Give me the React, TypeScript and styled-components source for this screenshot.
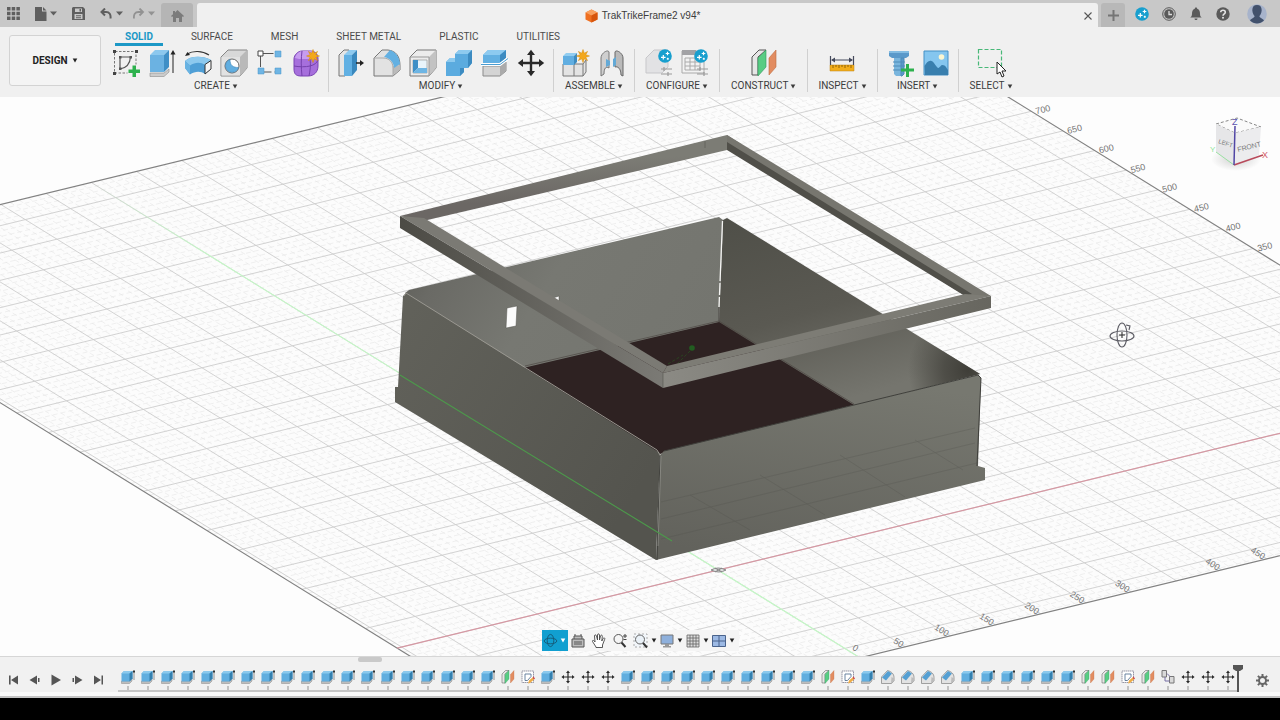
import React from "react";
import styled, { createGlobalStyle } from "styled-components";

const Global = createGlobalStyle`
  *, *::before, *::after { box-sizing: border-box; }
  body { margin: 0; background: #000; font-family: Roboto, "Liberation Sans", sans-serif; font-size: 10px; color: #3c3c3c; }
  button { font: inherit; color: inherit; border: 0; padding: 0; background: none; cursor: pointer; }
  svg { display: block; }
`;

const Page = styled.div`
  display: flex;
  flex-direction: column;
  min-height: 100vh;
`;

const TitleBar = styled.header`
  display: flex;
  height: 27px;
  padding-top: 3px;
  background: #c8c8c8;
`;

const QuickTools = styled.div`
  display: flex;
  align-items: center;
  gap: 15px;
  padding: 0 6px 3px 7px;
  color: #5f5f5f;
`;

const HistoryPair = styled.div`
  display: flex;
  gap: 9px;
`;

const QuickButton = styled.button<{ $faded?: boolean }>`
  display: flex;
  align-items: center;
  gap: 3px;
  color: ${(p) => (p.$faded ? "#929292" : "#5f5f5f")};
`;

const HomeTab = styled.button`
  display: flex;
  align-items: center;
  justify-content: center;
  width: 32px;
  padding-top: 2px;
  border-radius: 3px 3px 0 0;
  background: #b5b5b5;
  color: #7b7b7b;
`;

const DocumentTab = styled.div`
  flex: 1;
  display: flex;
  align-items: center;
  margin: 0 3px 0 4px;
  padding: 2px 6px 0 4px;
  border-radius: 3px 3px 0 0;
  background: #f0f0f0;
`;

const DocumentName = styled.h1`
  flex: 1;
  display: flex;
  align-items: center;
  justify-content: center;
  gap: 4px;
  margin: 0;
  font-family: "Liberation Sans", Arial, sans-serif;
  font-size: 10px;
  line-height: 16px;
  font-weight: 400;
`;

const PlusTab = styled.button`
  display: flex;
  align-items: center;
  justify-content: center;
  width: 24px;
  border-radius: 3px 3px 0 0;
  background: #b8b8b8;
  color: #757575;
`;

const Account = styled.div`
  display: flex;
  align-items: center;
  gap: 13px;
  padding: 0 13px 3px 10px;
  color: #5a5a5a;
`;

const Avatar = styled.button`
  margin-left: 4px;
`;

const Toolbar = styled.section`
  display: flex;
  height: 70px;
  background: #f0f0f0;
`;

const Workspace = styled.button`
  display: flex;
  align-items: center;
  justify-content: center;
  gap: 4px;
  width: 92px;
  height: 51px;
  margin: 8px 3px 0 9px;
  border: 1px solid #d3d3d3;
  border-radius: 3px;
  background: #f4f4f4;
  font-weight: 700;
  color: #222;
`;

const Ribbon = styled.div`
  flex: 1;
`;

const RibbonTabs = styled.nav`
  display: flex;
  gap: 18px;
  height: 19px;
  padding-left: 11px;
`;

const RibbonTab = styled.button<{ $active?: boolean }>`
  padding: 4px 10px 0;
  line-height: 12px;
  border-bottom: 3px solid ${(p) => (p.$active ? "#1c98c6" : "transparent")};
  color: ${(p) => (p.$active ? "#1c98c6" : "#4b4b4b")};
  font-weight: ${(p) => (p.$active ? 700 : 400)};
`;

const Groups = styled.div`
  display: flex;
  padding-top: 3px;
`;

const Group = styled.div<{ $pad: number }>`
  display: flex;
  flex-direction: column;
  align-items: center;
  gap: 3px;
  height: 43px;
  padding: 0 ${(p) => p.$pad}px;
  border-right: 1px solid #d0d0d0;
  &:last-child { border-right: 0; }
`;

const GroupIcons = styled.div`
  display: flex;
  gap: 8px;
`;

const GroupMenu = styled.button`
  display: flex;
  align-items: center;
  gap: 2px;
  line-height: 12px;
  white-space: nowrap;
  color: #3c3c3c;
`;

const Viewport = styled.main`
  position: relative;
  flex: 1;
  display: flex;
  min-height: 300px;
  overflow: hidden;
  background: #fdfdfd;
`;

const Scene = styled.svg`
  flex: 1;
  width: 100%;
  height: auto;
  min-width: 0;
`;

const ViewCube = styled.svg`
  position: absolute;
  top: 15px;
  right: 6px;
`;

const NavBar = styled.div`
  position: absolute;
  bottom: 5px;
  left: 0;
  right: 0;
  width: max-content;
  margin: 0 auto;
  display: flex;
  height: 21px;
  padding-right: 4px;
  background: #f5f5f5;
`;

const NavButton = styled.button<{ $active?: boolean; $wide?: boolean }>`
  display: flex;
  align-items: center;
  justify-content: ${(p) => (p.$wide ? "flex-end" : "center")};
  gap: 2px;
  width: ${(p) => (p.$wide ? 26 : 21)}px;
  padding-right: ${(p) => (p.$active ? 2 : 0)}px;
  background: ${(p) => (p.$active ? "#119fd0" : "transparent")};
  color: ${(p) => (p.$active ? "#fff" : "#222")};
`;

const Timeline = styled.footer`
  display: flex;
  height: 42px;
  border-top: 1px solid #d6d6d6;
  border-bottom: 2px solid #c4c4c4;
  background: linear-gradient(#f1f1f1 35px, #fafafa 35px);
`;

const Playback = styled.div`
  display: flex;
  align-items: center;
  gap: 7px;
  padding: 7px 13px 0 7px;
  color: #555;
`;

const Track = styled.div`
  display: flex;
  flex-direction: column;
`;

const Thumb = styled.div`
  width: 24px;
  height: 5px;
  margin-left: 240px;
  border-radius: 2px;
  background: #c9c9c9;
`;

const Features = styled.div`
  display: flex;
  margin-top: 8px;
  border-bottom: 2px solid #c6c6c6;
`;

const Feature = styled.button`
  display: flex;
  flex-direction: column;
  align-items: center;
  gap: 2px;
  width: 20px;
  &::after { content: ""; width: 2px; height: 4px; background: #c2c2c2; }
`;

const PlayHead = styled.div`
  margin: 8px 0 0 -5px;
  z-index: 1;
`;

const Settings = styled.button`
  display: flex;
  align-items: center;
  margin: 7px 0 0 13px;
  color: #666;
`;

const Letterbox = styled.div`
  height: 22px;
  background: #000;
`;

const Caret = () => (
  <svg width="6" height="5" viewBox="0 0 6 5" aria-hidden="true">
    <path d="M.7.5h4.600L3 4.600z" fill="currentColor" />
  </svg>
);

const WideCaret = () => (
  <svg width="7" height="5" viewBox="0 0 7 5" aria-hidden="true">
    <path d="M0 .5h7L3.500 4.500z" fill="currentColor" />
  </svg>
);

const Spark = ({ x = 0, y = 0 }: { x?: number; y?: number }) => (
  <g transform={`translate(${x} ${y})`}>
    <circle cx="7" cy="7" r="6.800" fill="#189fce" />
    <path d="M5.300 6v4.600M3 8.300h4.600M9.500 2.700v3.600M7.700 4.500h3.600M9.800 8.800v2M8.800 9.800h2" stroke="#fff" strokeWidth="1.200" fill="none" />
  </g>
);

const Sun = ({ x, y }: { x: number; y: number }) => (
  <path
    transform={`translate(${x} ${y})`}
    d="M0-6.500 1.300-2.800 4.600-4.600 2.800-1.300 6.500 0 2.800 1.300 4.600 4.600 1.300 2.800 0 6.500-1.300 2.800-4.600 4.600-2.800 1.300-6.500 0-2.800-1.300-4.600-4.600-1.300-2.800z"
    fill="#f3a81c"
    stroke="#d58a08"
    strokeWidth=".5"
  />
);

const MoveArrows = (
  <path
    d="M14 .8 18 6h-2.800v6.800H22V10l5.200 4-5.200 4v-2.800h-6.800V22H18l-4 5.200L10 22h2.800v-6.800H6V18L.8 14 6 10v2.800h6.800V6H10z"
    fill="#292929"
  />
);

const icons: Record<string, React.ReactNode> = {
  sketch: (
    <>
      <path d="M3 2.500h21v13M2.500 4v20h13" fill="none" stroke="#777" strokeDasharray="2.500 1.500" />
      <path d="M1 1h3v3H1zM23 1h3v3h-3zM1 23h3v3H1z" fill="#444" />
      <path d="M8 8h11M8 8v12c6-1 10-5 10.500-12" fill="none" stroke="#555" strokeWidth="1.200" />
      <path d="M7 7h2.500v2.500H7zM17.500 7H20v2.500h-2.500zM7 18.500h2.500V21H7z" fill="#555" />
      <path d="M20.500 16.500h3.500v4h4V24h-4v4h-3.500v-4h-4v-3.500h4z" fill="#2db14d" />
    </>
  ),
  extrude: (
    <>
      <path d="M2 24h14l5-4v3l-5 4.500H2z" fill="#ccc" stroke="#8a8a8a" strokeWidth=".6" />
      <path d="M2 6h14v17H2z" fill="#6bb2e2" />
      <path d="M2 6 7 1h14l-5 5z" fill="#8cc8ee" />
      <path d="m16 6 5-5v17l-5 5z" fill="#3f8fc6" />
      <path d="M25 24V4" stroke="#222" />
      <path d="m25 1 2.500 4.500h-5z" fill="#222" />
    </>
  ),
  revolve: (
    <>
      <path d="M3 5c6-3.500 15-3.500 22 1" fill="none" stroke="#333" strokeWidth="1.200" />
      <path d="m1 7 2.500-4L6 6z" fill="#222" />
      <path d="M1 12c5-5 17-6 26-1v9l-6 5c-4-3-10-3-15 .5L1 19z" fill="#4f9fd6" />
      <path d="M1 12c5-5 17-6 26-1l-6 5c-4-3-10-3-15 .5z" fill="#8dc9ee" />
      <path d="M6 16.500v9L1 19v-7z" fill="#69b3e2" />
      <path d="m21 15.500 6-4V20l-6 5z" fill="#f5f5f5" stroke="#333" />
    </>
  ),
  hole: (
    <>
      <path d="m1 8 7-7h19v18l-7 8H1z" fill="#d8d8d8" stroke="#858585" />
      <path d="m20 8 7-7v18l-7 8z" fill="#b9b9b9" />
      <path d="M1.500 8H20v18.500H1.500z" fill="#e2e2e2" />
      <circle cx="12" cy="17" r="7" fill="#fff" stroke="#666" />
      <path d="M10 10.500c0 6 3 8 8.500 8-1 4-5 5.500-8.500 4.500-6-2-6-10.500 0-12.500z" fill="#61aee0" stroke="#3f87b8" strokeWidth=".6" />
    </>
  ),
  pattern: (
    <>
      <path d="M4.500 4.500H24M4.500 5v18H24" fill="none" stroke="#555" strokeDasharray="13 3" />
      <path d="M2 2h5v5H2z" fill="#fff" stroke="#444" />
      <path d="M19 2h6v6h-6zM2 19h6v6H2zM19 19h6v6h-6z" fill="#6fb5e4" stroke="#4b96c8" strokeWidth=".5" />
    </>
  ),
  form: (
    <>
      <path d="M2 10c0-4 4-8 8-8h8c5 0 8 3 8 8v7c0 6-4 10-10 10H9c-5 0-7-2-7-7z" fill="#a66fdc" stroke="#7a45b4" />
      <path d="M3 9c1-4 4-7 8-7h7c3 0 5 2 6 4-3 3-6 4-9 4H7z" fill="#c79cf0" />
      <path d="M10 2c-1 7-1 17 0 25M2 17c5 1 12 1 16 0 4-1 7-3 8-6M18 10c1 6 0 12-1 17" fill="none" stroke="#7541ac" />
      <Sun x={21} y={7} />
    </>
  ),
  presspull: (
    <>
      <path d="M2 6 7 1h5v20l-4 6H2z" fill="#e5e5e5" stroke="#777" />
      <path d="M7 6h8v21H7z" fill="#61b0e3" />
      <path d="m7 6 5-5h8l-5 5z" fill="#8dcaf0" />
      <path d="m15 6 5-5v20l-5 6z" fill="#3988be" />
      <path d="M19 14h5" stroke="#222" strokeWidth="1.500" />
      <path d="m23 11 4 3-4 3z" fill="#222" />
    </>
  ),
  fillet: (
    <>
      <path d="m1 9 8-8h6c8 1 12 6 12 16v4l-7 6H1z" fill="#e2e2e2" stroke="#777" />
      <path d="M20 26v-9l7-1v5z" fill="#bbb" />
      <path d="M20 27v-8c0-6-4-10-10-10H1" fill="none" stroke="#aaa" />
      <path d="M11 8 17 1c6 2 10 8 10 14l-6 4c0-5-4-10-10-11z" fill="#63b0e2" />
    </>
  ),
  shell: (
    <>
      <path d="m1 8 7-7h19v18l-7 8H1z" fill="#ececec" stroke="#777" />
      <path d="m20 8 7-7v18l-7 8z" fill="#c3c3c3" />
      <path d="M1 8h19v19" fill="none" stroke="#999" />
      <path d="M4 11h14v13H4z" fill="#e9f4fb" stroke="#999" strokeWidth=".7" />
      <path d="M4 11h5v8l-5 5z" fill="#3f8fc6" />
      <path d="M9 19h9v5H4z" fill="#6db5e4" />
    </>
  ),
  combine: (
    <>
      <path d="m10 5 4-4h13v13l-4 5h-4v4l-4 4H1V13l4-4h5z" fill="#5babdf" />
      <path d="m10 5 4-4h13l-4 4zM1 13l4-4h5v4z" fill="#8dcaef" />
      <path d="m23 5 4-4v13l-4 5zM15 19h4v4l-4 4z" fill="#3c8bc1" />
    </>
  ),
  split: (
    <>
      <path d="M2 17h17l6-4v9l-6 5H2z" fill="#d4d4d4" stroke="#8b8b8b" />
      <path d="m19 17 6-4v9l-6 5z" fill="#aaa" />
      <path d="m2 6 5-5h18v8l-6 5H2z" fill="#63b0e2" />
      <path d="m2 6 5-5h18l-6 5z" fill="#8dcaf0" />
      <path d="m19 6 6-5v8l-6 5z" fill="#3c8bc1" />
      <path d="M0 15.500h19l8-6" fill="none" stroke="#fff" strokeWidth="3" />
      <path d="M0 15.500h19l8-6" fill="none" stroke="#4b9ed2" />
    </>
  ),
  move: MoveArrows,
  component: (
    <>
      <path d="M1 15h20l3-4v12l-3 4H1z" fill="#e3e3e3" stroke="#777" />
      <path d="M12 15v12M21 15v12" fill="none" stroke="#777" />
      <path d="M1 7h11v9H1z" fill="#61aee1" />
      <path d="m1 7 3-3h11l-3 3z" fill="#92cdf0" />
      <path d="m12 7 3-3v9l-3 3z" fill="#3d8cc1" />
      <Sun x={21} y={7} />
    </>
  ),
  joint: (
    <>
      <path d="M3 9c0-5 7-9 8-6v16c-3-2-5 0-5 6l-3 2z" fill="#cfcfcf" stroke="#777" />
      <path d="M25 9c0-5-7-9-8-6v15c3-1 6 2 6 8l2 1z" fill="#bababa" stroke="#666" />
      <path d="m8 10 4 2v4l-4 2zM15 10l3-2v8l-3 2z" fill="#63a9d6" />
    </>
  ),
  configure: (
    <>
      <path d="m1 9 8-8h14v17l-6 6H1z" fill="#e2e2e4" stroke="#c7c7ca" />
      <path d="M16 20h11M16 25h11M19 18v4M23 23v4" stroke="#9a9a9a" strokeWidth="1.200" />
      <Spark x={13} y={0} />
    </>
  ),
  configTable: (
    <>
      <path d="M1 2h22v22H1z" fill="#f2f2f2" stroke="#aaa" />
      <path d="M1 1h14v5H1z" fill="#a2a2a5" />
      <path d="M4 9h15v12H4zM4 13h15M4 17h15M9 9v12M14 9v12" fill="none" stroke="#aaa" />
      <path d="M16 20h11M16 25h11M19 18v4M23 23v4" stroke="#999" strokeWidth="1.200" />
      <Spark x={13} y={0} />
    </>
  ),
  plane: (
    <>
      <path d="m2 8 7-7h7L8 8v18H2z" fill="#e6e6e6" stroke="#555" />
      <path d="m8 9 8-8v17l-8 9z" fill="#58cc83" stroke="#31975a" strokeWidth=".6" />
      <path d="m19 9 7-8v17l-7 8z" fill="#e28c60" stroke="#bd6c40" strokeWidth=".6" />
    </>
  ),
  measure: (
    <>
      <path d="M2 16h24v6H2z" fill="#f2ad1b" stroke="#bd8211" strokeWidth=".5" />
      <path d="M5 16v3M8 16v2M11 16v3M14 16v2M17 16v3M20 16v2M23 16v3" stroke="#795000" strokeWidth=".8" />
      <path d="M2.500 7v9M25.500 7v9M4 11h20" stroke="#454a5c" strokeWidth="1.200" />
      <path d="m3 11 4-2.500v5zM25 11l-4-2.500v5z" fill="#454a5c" />
    </>
  ),
  bolt: (
    <>
      <path d="M3 2h20v5l-3 2H6L3 7z" fill="#5a99ca" />
      <path d="M3 2h20v2H3z" fill="#83bce2" />
      <path d="M8 9h10v16l-2 2h-6l-2-2z" fill="#79b5dd" />
      <path d="M15 9h3v16l-2 2h-1zM7 13h12M7 17h12M7 21h12" stroke="#4f8bb8" fill="#5a99ca" />
      <path d="M20 15h3v4.500h5v3h-5V28h-3v-5.500h-5v-3h5z" fill="#2db14d" />
    </>
  ),
  image: (
    <>
      <path d="M2 2h24v24H2z" fill="#85c6ef" stroke="#4590c5" />
      <path d="M2.500 17c2-3 4-6 7-5 3 1 5 7 7 7 2-1 2-3 4-3 3 0 4 3 5.500 5v5h-23z" fill="#397fae" />
      <circle cx="19.500" cy="8" r="2.800" fill="#fbf6d1" />
    </>
  ),
  select: (
    <>
      <path d="M1.500.500h23v18h-23z" fill="none" stroke="#48b878" strokeWidth="1.200" strokeDasharray="4 2" />
      <path d="M20 13v12l3-2 2 5 2-1-2-5h4z" fill="#fff" stroke="#222" />
    </>
  ),
  chamfer: (
    <>
      <path d="m1 14 12-13c8 2 13 7 13 14v7l-5 5H1z" fill="#e2e2e2" stroke="#858585" strokeWidth="1.500" />
      <path d="M2 15 14 2l8 5L10 21z" fill="#559fd2" />
      <path d="m20 27 1-13 5 3v6z" fill="#bcbcbc" />
    </>
  ),
  miniSketch: (
    <>
      <path d="M2 2h23v23H2z" fill="#fff" stroke="#778" strokeWidth="1.500" strokeDasharray="3 1" />
      <path d="M8 8h12v5l-7 8H8z" fill="none" stroke="#5a7796" strokeWidth="1.800" />
      <path d="m14 27 2-6 7-6 3 4-8 7z" fill="#efac45" />
      <path d="m23 15 2-2 3 4-2 2z" fill="#d14949" />
    </>
  ),
  link: (
    <>
      <path d="M2 1h9v13H2zM17 13h9v13h-9z" fill="#d9d9d9" stroke="#777" strokeWidth="2" />
      <path d="M8 14v8h9M12 7l6 6" fill="none" stroke="#776ea5" strokeWidth="2" />
    </>
  ),
  miniExtrude: (
    <>
      <path d="M1 22h16l5-5v5l-5 5H1z" fill="#bdbdbd" stroke="#888" />
      <path d="m1 7 5-5h17v15l-6 6H1z" fill="#61aedf" />
      <path d="m1 7 5-5h17l-6 5z" fill="#8cc9ed" />
      <path d="m17 7 6-5v15l-6 6z" fill="#347fae" />
      <path d="M26 4v16" stroke="#777" strokeWidth="1.500" />
      <path d="M24 1h4v4h-4z" fill="#333" />
    </>
  ),
};

const Icon = ({ name, size = 28 }: { name: string; size?: number }) => (
  <svg width={size} height={size} viewBox="0 0 28 28" overflow="visible" aria-hidden="true">
    {icons[name]}
  </svg>
);

const groups: { label: string; pad: number; tools: string[] }[] = [
  { label: "CREATE", pad: 8, tools: ["sketch", "extrude", "revolve", "hole", "pattern", "form"] },
  { label: "MODIFY", pad: 8, tools: ["presspull", "fillet", "shell", "combine", "split", "move"] },
  { label: "ASSEMBLE", pad: 8, tools: ["component", "joint"] },
  { label: "CONFIGURE", pad: 10, tools: ["configure", "configTable"] },
  { label: "CONSTRUCT", pad: 11, tools: ["plane"] },
  { label: "INSPECT", pad: 10, tools: ["measure"] },
  { label: "INSERT", pad: 8, tools: ["bolt", "image"] },
  { label: "SELECT", pad: 11, tools: ["select"] },
];

const repeat = (name: string, n: number) => Array.from({ length: n }, () => name);
const history = [
  ...repeat("miniExtrude", 19), "plane", "miniSketch", "miniExtrude", ...repeat("move", 3),
  ...repeat("miniExtrude", 10), "plane", "miniSketch", "miniExtrude", ...repeat("chamfer", 4),
  ...repeat("miniExtrude", 6), "plane", "plane", "miniSketch", "plane", "link", ...repeat("move", 3),
];

/* Ground plane: one unit is 50 mm along each axis, measured from the model origin. */
const MIN_A = -7.1, MAX_A = 16.75, MIN_B = -19.77, MAX_B = 4.48;
const at = (a: number, b: number): [number, number] => [718 + 45.2 * a + 31.7 * b, 570 - 11 * a + 19.6 * b];
const segment = (p: [number, number], q: [number, number]) =>
  `M${p[0].toFixed(1)} ${p[1].toFixed(1)}L${q[0].toFixed(1)} ${q[1].toFixed(1)}`;

const gridPath = (major: boolean) => {
  let d = "";
  for (let i = -98; i <= 83; i++) {
    if ((i % 5 === 0) !== major) continue;
    const t = i / 5;
    if (t > MIN_A && t < MAX_A) d += segment(at(t, MIN_B), at(t, MAX_B));
    if (t > MIN_B && t < MAX_B) d += segment(at(MIN_A, t), at(MAX_A, t));
  }
  return d;
};
const border = [at(MIN_A, MIN_B), at(MAX_A, MIN_B), at(MAX_A, MAX_B), at(MIN_A, MAX_B)].map((p) => p.join(",")).join(" ");

const Model = () => (
  <g>
    <polygon points="405,293 409,290 719,217 723,220 719,324 525,369 450,340" fill="url(#wallBack)" />
    <polygon points="723,220 727,218 980,374 853,406 719,323" fill="url(#wallRight)" />
    <polygon points="723,220 727,218 980,374 853,406 719,323" fill="url(#cornerShade)" />
    <polygon points="523,368 719,322 854,405 660,454" fill="#2e2222" />
    <path d="M722.500 221 719 307" stroke="#f4f4f2" strokeWidth="1.300" strokeDasharray="60 2 12 2" />
    <path d="M719 307v15" stroke="#4c4b46" />
    <path d="M507 308l10-2-1 20-10 2zM553 298l6-2v6z" fill="#fbfbfb" stroke="#55554f" strokeWidth=".5" />
    <polygon points="403,296 406,293 660,453 656,560 395,402 395,387 398,387" fill="url(#outerLeft)" />
    <polygon points="660,455 664,451 978,375 981,378 978,466 985,468 985,480 656,560" fill="url(#outerFront)" />
    <path d="M404 296 406 293 657 450 660 455" fill="none" stroke="#999790" />
    <path d="M664 451 978 375 981 378 977 466M657 560l3-104" fill="none" stroke="#3f3f3b" />
    <path d="M658 546 661 456" stroke="#8f8f89" strokeWidth=".8" />
    <path d="M661 502 975 428M661 519 975 443M661 539 977 463M690 495l60 35M760 475l65 40M840 455l65 42M915 440l48 30" stroke="#4e4e48" strokeWidth=".6" opacity=".4" />
    <path d="M525 366 719 321 854 404" fill="none" stroke="#4d4743" strokeWidth=".7" />
    <path d="m400 375 272 166" stroke="#4c9a4b" strokeWidth="1.100" />
    <circle cx="692" cy="348" r="2.800" fill="#225d21" />
    <path d="m668 364 15-9M690 351l-14 14" stroke="#28501f" strokeWidth=".7" strokeDasharray="3 2" />

    <polygon points="400,216 727,135 741,144 727,150 423,221" fill="url(#barBack)" />
    <polygon points="727,135 991,296 967,297 727,146" fill="#77766f" />
    <polygon points="727,142 972,294 965,296 727,150" fill="#504f49" />
    <polygon points="400,216 424,218 667,366 663,373" fill="#7b7a74" />
    <polygon points="400,216 663,373 663,388 400,228" fill="url(#barLeft)" />
    <polygon points="667,366 965,294 991,296 663,373" fill="#7d7c75" />
    <polygon points="663,373 991,296 991,308 663,388" fill="url(#barFront)" />
    <path d="M705 141v7M663 373v15" stroke="#56554f" strokeWidth=".6" />
  </g>
);

const GroundLabels = () => (
  <g fill="#747474" fontSize="9" fontFamily="Liberation Sans, sans-serif">
    {[700, 650, 600, 550, 500, 450, 400, 350].map((n) => {
      const [x, y] = at(MAX_A, -n / 50);
      return <text key={n} transform={`translate(${x + 5} ${y + 3}) rotate(-14)`}>{n}</text>;
    })}
    {[0, 50, 100, 150, 200, 250, 300, 400, 450].map((n) => {
      const [x, y] = at(n / 50, MAX_B);
      return (
        <text key={n} textAnchor="end" transform={`translate(${x - 4} ${Math.min(y + 1, 652)}) rotate(32)`}>{n}</text>
      );
    })}
  </g>
);

const navTools: { label: string; caret?: boolean; art: React.ReactNode }[] = [
  { label: "Look at", art: <path d="M2 6h12v8H2zM4 6V3h8v3M5 3V1M11 3V1M4 9h8M4 11h8" fill="#bbb" stroke="#555" /> },
  {
    label: "Pan",
    art: <path d="M5 14 1.500 8.500C1 7 3 7 4 9L3.500 3c0-1.500 1.500-1.500 2 0L6.500 7V2c0-1.500 1.800-1.500 2 0v5l1-4c.5-1.500 2-1 1.800.3L10.800 8l1.400-2.500c.8-1.200 2-.5 1.500.8L11.500 12v2.500H5z" fill="#fff" stroke="#444" strokeWidth=".9" />,
  },
  {
    label: "Zoom",
    art: <><circle cx="6.500" cy="6" r="4.500" fill="#f5f5f5" stroke="#555" /><path d="m9.500 9.500 4 4.500" stroke="#333" strokeWidth="2" /><path d="M13 1v4M11 3h4M11.500 6.500h3" stroke="#444" /></>,
  },
  {
    label: "Fit",
    caret: true,
    art: <><path d="M1 1h13v13H1z" fill="#f2f6fa" stroke="#aaa" strokeDasharray="2 2" /><circle cx="7" cy="6.500" r="4.500" fill="#eaf1f7" stroke="#666" /><path d="m10 10 4 4.500" stroke="#333" strokeWidth="2" /></>,
  },
  { label: "Display settings", caret: true, art: <><path d="M2 2h12v9H2z" fill="#8eb0dc" stroke="#777" /><path d="M6 11h4v2h2v1.500H4V13h2z" fill="#999" /></> },
  { label: "Grid and snaps", caret: true, art: <path d="M2 2h12v12H2zM5 2v12M8 2v12M11 2v12M2 5h12M2 8h12M2 11h12" fill="#ddd" stroke="#666" strokeWidth=".8" /> },
  { label: "Viewports", caret: true, art: <path d="M1.500 2.500h13v11h-13zM8 2.500v11M1.500 8h13" fill="#9cb9e4" stroke="#4a638c" /> },
];

const playback: [string, string][] = [
  ["Go to start", "M2 2.500h1.600v9H2zM11 2.500v9L4 7z"],
  ["Step back", "M9 2.500v9L1.500 7zM10 5h1.500v4H10z"],
  ["Play", "M2.500 1.500 12 7l-9.500 5.500z"],
  ["Step forward", "M5 2.500v9L12.500 7zM2.500 5H4v4H2.500z"],
  ["Go to end", "M10.500 2.500H12v9h-1.500zM3 2.500v9L10 7z"],
];

export default function App() {
  return (
    <Page>
      <Global />
      <TitleBar>
        <QuickTools>
          <QuickButton aria-label="Show data panel">
            <svg width="13" height="13" viewBox="0 0 13 13"><path d="M0 0h3.500v3.500H0zM4.700 0h3.500v3.500H4.700zM9.400 0h3.500v3.500H9.400zM0 4.700h3.500v3.500H0zM4.700 4.700h3.500v3.500H4.700zM9.400 4.700h3.500v3.500H9.400zM0 9.400h3.500v3.500H0zM4.700 9.400h3.500v3.500H4.700zM9.400 9.400h3.500v3.500H9.400z" fill="currentColor" /></svg>
          </QuickButton>
          <QuickButton aria-label="File">
            <svg width="12" height="14" viewBox="0 0 12 14"><path d="M0 0h7v4.500h4.500V14H0zM8 0l3.500 3.500H8z" fill="currentColor" /></svg>
            <WideCaret />
          </QuickButton>
          <QuickButton aria-label="Save">
            <svg width="13" height="13" viewBox="0 0 13 13"><path fillRule="evenodd" d="M1 0h10l2 2v11H0V1zM3 1.500V5h7V1.500zM2.500 7v5h8V7zM7.500 2H9v2.500H7.500zM4 8.300h5v.9H4zM4 10.300h5v.9H4z" fill="currentColor" /></svg>
          </QuickButton>
          <HistoryPair>
            <QuickButton aria-label="Undo">
              <svg width="13" height="12" viewBox="0 0 13 12"><path d="M5 .5 1.500 4 5 7.500M2 4h4c3.500 0 5 2.500 4.500 6.500" fill="none" stroke="currentColor" strokeWidth="2" /></svg>
              <WideCaret />
            </QuickButton>
            <QuickButton aria-label="Redo" $faded>
              <svg width="13" height="12" viewBox="0 0 13 12"><path d="M7.500.5 11 4 7.500 7.500M10.500 4h-4C3 4 1.500 6.500 2 10.500" fill="none" stroke="currentColor" strokeWidth="1.800" /></svg>
              <WideCaret />
            </QuickButton>
          </HistoryPair>
        </QuickTools>
        <HomeTab aria-label="Home">
          <svg width="13" height="12" viewBox="0 0 13 12"><path d="M6.500 0 13 6l-1 1-1-.8V12H8V8H5v4H2V6.200L1 7 0 6l2-1.800V1h2v1.400z" fill="currentColor" /></svg>
        </HomeTab>
        <DocumentTab>
          <DocumentName>
            <svg width="13" height="14" viewBox="0 0 13 14"><path d="m6.500.5 6 3v7l-6 3-6-3v-7z" fill="#ef6f20" /><path d="m6.500.5 6 3-6 3-6-3z" fill="#f8a05f" /><path d="m12.500 3.500-6 3v7l6-3z" fill="#d6550d" /></svg>
            TrakTrikeFrame2 v94*
          </DocumentName>
          <button aria-label="Close document">
            <svg width="8" height="8" viewBox="0 0 8 8"><path d="m.5.500 7 7m0-7-7 7" stroke="#555" strokeWidth="1.100" /></svg>
          </button>
        </DocumentTab>
        <PlusTab aria-label="New design">
          <svg width="11" height="11" viewBox="0 0 11 11"><path d="M5.500 0v11M0 5.500h11" stroke="currentColor" strokeWidth="2" /></svg>
        </PlusTab>
        <Account>
          <button aria-label="Extensions"><svg width="14" height="14" viewBox="0 0 14 14"><Spark /></svg></button>
          <button aria-label="Job status">
            <svg width="14" height="14" viewBox="0 0 14 14"><circle cx="7" cy="7" r="6.300" fill="none" stroke="currentColor" /><circle cx="7" cy="7" r="4.800" fill="currentColor" /><path d="M7 4v3.500h3" fill="none" stroke="#ddd" strokeWidth="1.300" /></svg>
          </button>
          <button aria-label="Notifications">
            <svg width="14" height="14" viewBox="0 0 14 14"><path d="M7 .5c.8 0 1.200.5 1.200 1.200C10.500 2.500 11 4.500 11 7c0 2 .8 2.700 1.800 3.500H1.200C2.200 9.700 3 9 3 7c0-2.500.5-4.500 2.800-5.300C5.800 1 6.200.5 7 .5zM5.500 11.500h3c0 2-3 2-3 0z" fill="currentColor" /></svg>
          </button>
          <button aria-label="Help">
            <svg width="14" height="14" viewBox="0 0 14 14"><circle cx="7" cy="7" r="6.700" fill="currentColor" /><path d="M4.700 5.200C4.900 2.500 9.300 2.700 9.300 5.200 9.300 6.800 7 6.800 7 8.700" fill="none" stroke="#e3e3e3" strokeWidth="1.600" /><circle cx="7" cy="10.700" r="1" fill="#e3e3e3" /></svg>
          </button>
          <Avatar aria-label="Profile">
            <svg width="20" height="20" viewBox="0 0 20 20"><circle cx="10" cy="10" r="9.800" fill="#a7b3cb" /><path d="M10 1c3.500 0 5 2.500 4.600 6-.3 2.500-1.200 4-2.200 5 .1 2 3.600 2.500 4.600 4.500-4 4-10 4-14 0 1-2 4.500-2.500 4.600-4.500C6.600 11 5.700 9.500 5.400 7 5 3.500 6.500 1 10 1z" fill="#42516c" /></svg>
          </Avatar>
        </Account>
      </TitleBar>

      <Toolbar aria-label="Design tools">
        <Workspace>DESIGN <Caret /></Workspace>
        <Ribbon>
          <RibbonTabs>
            {["SOLID", "SURFACE", "MESH", "SHEET METAL", "PLASTIC", "UTILITIES"].map((t, i) => (
              <RibbonTab key={t} $active={i === 0}>{t}</RibbonTab>
            ))}
          </RibbonTabs>
          <Groups>
            {groups.map((g) => (
              <Group key={g.label} $pad={g.pad}>
                <GroupIcons>
                  {g.tools.map((t) => (
                    <button key={t} aria-label={t}><Icon name={t} /></button>
                  ))}
                </GroupIcons>
                <GroupMenu>{g.label}<Caret /></GroupMenu>
              </Group>
            ))}
          </Groups>
        </Ribbon>
      </Toolbar>

      <Viewport>
        <Scene viewBox="0 97 1280 559" preserveAspectRatio="xMidYMid slice" role="img" aria-label="3D model of an open box with a frame above it">
          <defs>
            <linearGradient id="wallBack" x1="0" x2="1" y1=".3" y2=".6">
              <stop offset="0" stopColor="#5f5f59" /><stop offset=".12" stopColor="#6a6a65" /><stop offset=".45" stopColor="#777872" /><stop offset="1" stopColor="#74756f" />
            </linearGradient>
            <linearGradient id="wallRight" x1="0" x2=".4" y1="0" y2="1">
              <stop offset="0" stopColor="#4f4f48" /><stop offset=".55" stopColor="#5a5952" /><stop offset="1" stopColor="#75756e" />
            </linearGradient>
            <radialGradient id="cornerShade" gradientUnits="userSpaceOnUse" cx="968" cy="370" r="60">
              <stop offset="0" stopColor="#3f3e38" /><stop offset=".4" stopColor="#45443e" stopOpacity=".8" /><stop offset="1" stopColor="#45443e" stopOpacity="0" />
            </radialGradient>
            <linearGradient id="outerLeft" x1="0" x2="1" y1="0" y2=".6">
              <stop offset="0" stopColor="#62625b" /><stop offset="1" stopColor="#54544e" />
            </linearGradient>
            <linearGradient id="outerFront" x1=".3" x2=".6" y1="1" y2="0">
              <stop offset="0" stopColor="#62625c" /><stop offset="1" stopColor="#777870" />
            </linearGradient>
            <linearGradient id="barBack" x1=".48" x2=".55" y1=".3" y2=".75">
              <stop offset="0" stopColor="#7c7c75" /><stop offset="1" stopColor="#6b6764" />
            </linearGradient>
            <linearGradient id="barLeft"><stop offset="0" stopColor="#4c4b45" /><stop offset="1" stopColor="#7b7a75" /></linearGradient>
            <linearGradient id="barFront"><stop offset="0" stopColor="#8b8a84" /><stop offset="1" stopColor="#67665f" /></linearGradient>
            <linearGradient id="axisY" gradientUnits="userSpaceOnUse" x1="92" y1="183" x2="400" y2="373">
              <stop offset="0" stopColor="#c4f7c6" stopOpacity="0" /><stop offset=".4" stopColor="#c4f7c6" /><stop offset="1" stopColor="#c4f7c6" />
            </linearGradient>
          </defs>
          <polygon points={border} fill="#fcfcfc" />
          <path d={gridPath(false)} stroke="#e6e6e6" strokeWidth=".6" strokeDasharray="5 3" />
          <path d={gridPath(true)} stroke="#cdcdcd" strokeWidth=".9" />
          <polygon points={border} fill="none" stroke="#828282" strokeWidth="1.200" />
          <path d={segment(at(0, MIN_B), at(0, MAX_B))} stroke="url(#axisY)" strokeWidth="1.200" />
          <path d={segment(at(MIN_A, 0), at(MAX_A, 0))} stroke="#d698a3" strokeWidth="1.200" />
          <GroundLabels />
          <Model />
          <path d="M711 570q7-4 15 0-7 4-15 0zM715 568l7 4M722 568l-7 4" fill="#ddd" stroke="#888" />
          <g fill="none" stroke="#5c5c64" strokeWidth="1.100">
            <ellipse cx="1122" cy="335" rx="5" ry="12" />
            <ellipse cx="1122" cy="336" rx="12" ry="5" />
            <path d="M1122 332v6M1119 335h6" stroke="#333" />
            <path d="m1126 325 4 1-1 4" />
          </g>
        </Scene>
        <ViewCube width="66" height="62" viewBox="0 0 66 62" role="img" aria-label="View cube">
          <defs>
            <radialGradient id="cubeShadow"><stop offset="0" stopColor="#999" stopOpacity=".45" /><stop offset="1" stopColor="#999" stopOpacity="0" /></radialGradient>
          </defs>
          <ellipse cx="28" cy="47" rx="25" ry="12" fill="url(#cubeShadow)" />
          <path d="m8 12 21-6 24 9-26 6z" fill="#fafafa" stroke="#888" strokeDasharray="3 2" />
          <path d="M8 12v28l18 13 1-32z" fill="#e6e6e8" />
          <path d="m27 21 26-6-2 28-25 10z" fill="#ececee" />
          <path d="M8 40 26 53" stroke="#9ae0a2" />
          <path d="m26 53 29-10" stroke="#b84a5b" strokeWidth="1.500" />
          <path d="M26 53 27 14" stroke="#5146a5" strokeWidth="1.500" />
          <g fontFamily="Liberation Sans, sans-serif" fontSize="7" fill="#777">
            <text transform="translate(10 31) rotate(18)" fontSize="6">LEFT</text>
            <text transform="translate(30 40) rotate(-14)">FRONT</text>
            <text x="24" y="13" fontSize="9" fill="#5c52b0">Z</text>
            <text x="54" y="46" fontSize="9" fill="#d35e6d">X</text>
            <text x="2" y="40" fontSize="8" fill="#8fe59a">Y</text>
          </g>
        </ViewCube>
        <NavBar role="toolbar" aria-label="Navigation">
          <NavButton $active $wide aria-label="Orbit">
            <svg width="15" height="15" viewBox="0 0 16 16">
              <g fill="none" stroke="#155a78"><ellipse cx="8" cy="8" rx="3.500" ry="6.500" /><ellipse cx="8" cy="8.500" rx="6.700" ry="3" /></g>
            </svg>
            <Caret />
          </NavButton>
          {navTools.map((t) => (
            <NavButton key={t.label} aria-label={t.label} $wide={t.caret}>
              <svg width="16" height="16" viewBox="0 0 16 16">{t.art}</svg>
              {t.caret && <Caret />}
            </NavButton>
          ))}
        </NavBar>
      </Viewport>

      <Timeline>
        <Playback>
          {playback.map(([label, d]) => (
            <button key={label} aria-label={label}>
              <svg width="14" height="14" viewBox="0 0 14 14"><path d={d} fill="currentColor" /></svg>
            </button>
          ))}
        </Playback>
        <Track>
          <Thumb />
          <Features>
            {history.map((name, i) => (
              <Feature key={i} aria-label={`Feature ${i + 1}`}><Icon name={name} size={14} /></Feature>
            ))}
          </Features>
        </Track>
        <PlayHead>
          <svg width="10" height="27" viewBox="0 0 10 27"><path d="M0 0h10v4L7 6H6v21H4V6H3L0 4z" fill="#555" /></svg>
        </PlayHead>
        <Settings aria-label="Timeline settings">
          <svg width="13" height="13" viewBox="0 0 13 13">
            <circle cx="6.500" cy="6.500" r="3.500" fill="none" stroke="currentColor" strokeWidth="2" />
            <path d="M6.500 0v3M6.500 10v3M0 6.500h3M10 6.500h3M1.900 1.900l2 2M9.100 9.100l2 2M11.100 1.900l-2 2M3.900 9.100l-2 2" stroke="currentColor" strokeWidth="2" />
          </svg>
        </Settings>
      </Timeline>
      <Letterbox />
    </Page>
  );
}
